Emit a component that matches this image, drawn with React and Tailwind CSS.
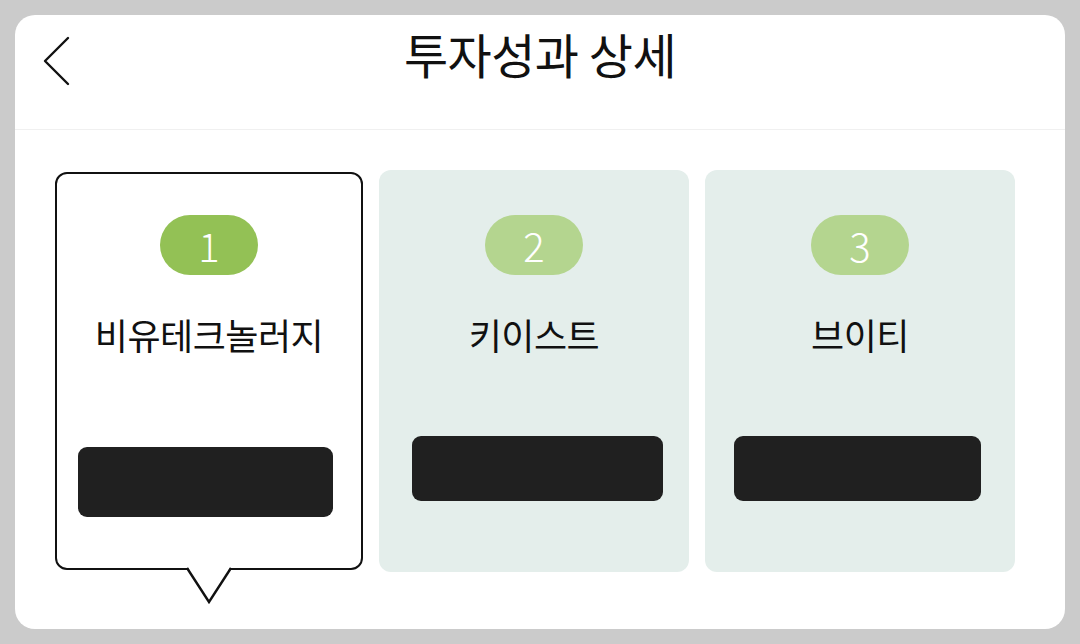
import React from "react";

const companies = [
  { id: 1, name: "비유테크놀러지", selected: true, blob: "ml-[21px] mt-[92px] w-[255px] h-[70px]" },
  { id: 2, name: "키이스트", selected: false, blob: "ml-[33px] mt-[81px] w-[251px] h-[65px]" },
  { id: 3, name: "브이티", selected: false, blob: "ml-[29px] mt-[81px] w-[247px] h-[65px]" },
];

function BackIcon() {
  return (
    <svg width="30" height="50" viewBox="0 0 30 50" fill="none">
      <polyline
        points="25,2 2,25 25,48"
        stroke="#111"
        strokeWidth="2.4"
        strokeLinecap="round"
        strokeLinejoin="round"
      />
    </svg>
  );
}

function Tail() {
  // speech bubble pointer under the selected card
  return (
    <svg
      className="absolute left-1/2 -translate-x-1/2 -bottom-[37px]"
      width="50"
      height="39"
      viewBox="0 0 50 39"
    >
      <polygon points="3,0 47,0 25,37" fill="#fff" />
      <polyline
        points="3,2 25,36 47,2"
        fill="none"
        stroke="#111"
        strokeWidth="2.4"
        strokeLinejoin="miter"
      />
    </svg>
  );
}

function CompanyCard({ c }) {
  const box = c.selected
    ? "relative w-[308px] h-[398px] rounded-[12px] border-[2.5px] border-[#111] bg-white pt-[41px]"
    : "relative w-[310px] h-[402px] rounded-[12px] bg-[#e4eeeb] pt-[45px]";
  const badge = c.selected ? "bg-[#93c155]" : "bg-[#b4d58f]";
  return (
    <div className={box + " shrink-0"}>
      <div className="flex flex-col items-center">
        <div
          className={
            badge +
            " w-[98px] h-[60px] rounded-full flex items-center justify-center text-white text-[40px] font-light leading-none"
          }
        >
          {c.id}
        </div>
        <div className="mt-[38px] text-[36px] font-normal leading-[42px] text-[#111] tracking-[-0.5px]">
          {c.name}
        </div>
      </div>
      <div className={c.blob + " bg-[#202020] rounded-[9px]"} />
      {c.selected && <Tail />}
    </div>
  );
}

export default function App() {
  return (
    <div
      className="h-[644px] w-[1080px] bg-[#cbcbcb] p-[15px] overflow-hidden"
      style={{ fontFamily: '"Noto Sans CJK KR", "Noto Sans", sans-serif' }}
    >
      <div className="h-[614px] w-[1050px] bg-white rounded-[20px] overflow-hidden">
        <div className="h-[115px] flex items-start border-b border-[#f0f0f0]">
          <div className="w-[120px] pl-[28px] pt-[21px]">
            <BackIcon />
          </div>
          <div className="flex-1 text-center pt-[10px] text-[48px] font-normal leading-[56px] text-[#111] tracking-[-0.5px]">
            투자성과 상세
          </div>
          <div className="w-[120px]" />
        </div>
        <div className="flex items-center gap-[16px] pl-[40px] pt-[40px]">
          {companies.map((c) => (
            <CompanyCard key={c.id} c={c} />
          ))}
        </div>
      </div>
    </div>
  );
}
